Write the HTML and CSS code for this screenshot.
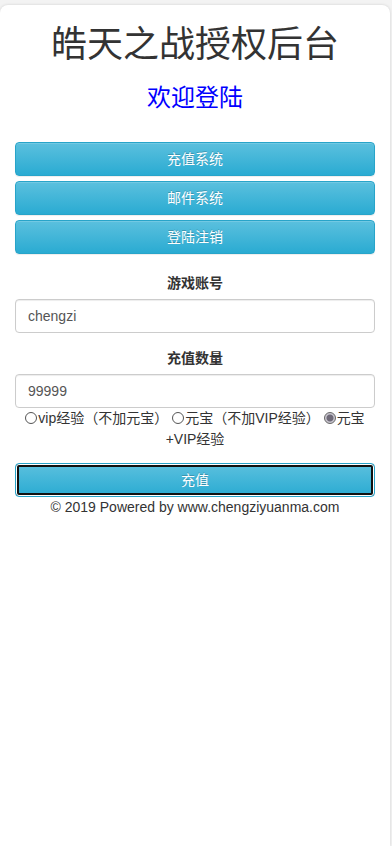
FILE: index.html
```html
<!DOCTYPE html>
<html lang="zh-CN">
<head>
  <meta charset="UTF-8" />
  <meta name="viewport" content="width=device-width, initial-scale=1.0" />
  <title>皓天之战授权后台</title>
  <link rel="stylesheet" href="styles.css">
</head>
<body>
  <div class="panel">
    <h1>皓天之战授权后台</h1>
    <h3 class="welcome">欢迎登陆</h3>

    <div class="nav">
      <button class="btn btn-info">充值系统</button>
      <button class="btn btn-info">邮件系统</button>
      <button class="btn btn-info">登陆注销</button>
    </div>

    <form class="pay-form">
      <div class="form-group">
        <label class="field-label" for="account">游戏账号</label>
        <input id="account" class="form-control" type="text" value="chengzi" />
      </div>
      <div class="form-group last">
        <label class="field-label" for="amount">充值数量</label>
        <input id="amount" class="form-control" type="text" value="99999" />
      </div>
      <div class="options">
        <label><span class="radio"></span>vip经验（不加元宝）</label>
        <label><span class="radio"></span>元宝（不加VIP经验）</label>
        <label><span class="radio checked"></span>元宝+VIP经验</label>
      </div>
      <button type="button" class="btn btn-info submit">充值</button>
    </form>

    <p class="footer">© 2019 Powered by www.chengziyuanma.com</p>
  </div>
</body>
</html>
```

FILE: styles.css
```css
* {
  margin: 0;
  padding: 0;
  box-sizing: border-box;
}

body {
  font-family: 'Liberation Sans', Arial, 'Noto Sans CJK SC', sans-serif;
  font-size: 14px;
  line-height: 20px;
  color: #333;
  background: #f3f3f3;
  overflow: hidden;
}

.panel {
  width: 390px;
  min-height: 841px;
  margin-top: 5px;
  padding: 0 15px;
  background: #ffffff;
  border-radius: 8px 8px 0 0;
  box-shadow: 0 0 3px rgba(0, 0, 0, 0.15);
}

h1 {
  padding-top: 20px;
  font-size: 36px;
  line-height: 40px;
  font-weight: 400;
  text-align: center;
  color: #333;
}

.welcome {
  margin-top: 20px;
  font-size: 24px;
  line-height: 26px;
  font-weight: 400;
  text-align: center;
  color: #0000ff;
}

.nav {
  margin-top: 31px;
  display: flex;
  flex-direction: column;
  gap: 5px;
}

.btn {
  display: block;
  width: 100%;
  height: 34px;
  padding-bottom: 2px;
  font-family: inherit;
  font-size: 14px;
  color: #ffffff;
  border-radius: 4px;
  cursor: pointer;
}

.btn-info {
  background: linear-gradient(to bottom, #5bc0de 0%, #2aabd2 100%);
  border: 1px solid #28a4c9;
  text-shadow: 0 -1px 0 rgba(0, 0, 0, 0.2);
  box-shadow: inset 0 1px 0 rgba(255, 255, 255, 0.15), 0 1px 1px rgba(0, 0, 0, 0.075);
}

.pay-form {
  margin-top: 19px;
}

.form-group {
  margin-bottom: 15px;
}

.form-group.last {
  margin-bottom: 0;
}

.field-label {
  display: block;
  margin-bottom: 6px;
  font-weight: bold;
  text-align: center;
}

.form-control {
  display: block;
  width: 100%;
  height: 34px;
  padding: 6px 12px;
  font-family: inherit;
  font-size: 14px;
  color: #555;
  border: 1px solid #ccc;
  border-radius: 4px;
  box-shadow: inset 0 1px 1px rgba(0, 0, 0, 0.075);
}

.options {
  text-align: center;
  line-height: 21px;
}

.radio {
  display: inline-block;
  width: 12px;
  height: 12px;
  margin-right: 1px;
  vertical-align: -1px;
  border: 1px solid #555;
  border-radius: 50%;
  background: #fff;
}

.radio.checked {
  background: radial-gradient(circle, #6f6a78 0 3px, #c9c6cf 4px);
  border-color: #666;
}

.submit {
  margin-top: 13px;
  border: 1px solid #28a4c9;
  box-shadow: inset 0 0 0 1px #fff, inset 0 0 0 3px #111;
}

.footer {
  text-align: center;
  color: #333;
}
```
